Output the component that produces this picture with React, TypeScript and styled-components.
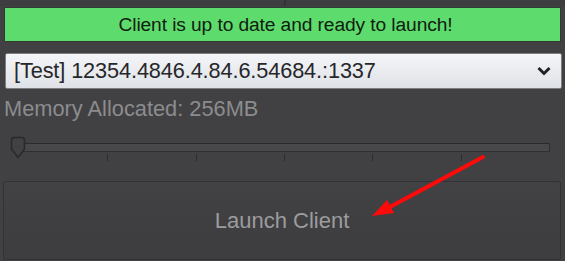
import React from "react";
import styled, { createGlobalStyle } from "styled-components";

const Global = createGlobalStyle`
  html, body { margin: 0; padding: 0; background: #414143; }
  body { font-family: "Liberation Sans", Arial, sans-serif; overflow: hidden; }
`;

const Page = styled.div`
  position: relative;
  width: 565px;
  height: 261px;
  background: #414143;
  display: flex;
  flex-direction: column;
`;

const TopStrip = styled.div`
  height: 6px;
  display: flex;
  background: #3d3d3f;
`;

const StripPane = styled.div<{ $w: number }>`
  width: ${(p) => p.$w}px;
  border-right: 2px solid #333335;
`;

const StatusBar = styled.div`
  margin: 1px 4px 0 4px;
  height: 33px;
  background: #5edb6d;
  border: 1px solid #2f3a30;
  display: flex;
  align-items: center;
  justify-content: center;
  padding-left: 6px;
  font-size: 19.2px;
  color: #102010;
  letter-spacing: -0.1px;
`;

const SelectBox = styled.div`
  margin: 11px 3px 0 5px;
  height: 34px;
  border: 1px solid #7c7e82;
  border-radius: 2px;
  background: linear-gradient(#f4f5f8, #dfe2e7);
  display: flex;
  align-items: center;
  padding: 0 10px 0 8px;
  font-size: 21.7px;
  color: #26272a;
`;

const SelectText = styled.span`
  flex: 1;
  white-space: nowrap;
  letter-spacing: -0.1px;
`;

const Label = styled.div`
  margin: 8px 0 0 4px;
  height: 24px;
  line-height: 24px;
  font-size: 21.8px;
  color: #8c8c8e;
`;

const SliderArea = styled.div`
  position: relative;
  margin: 16px 15px 0 12px;
  height: 28px;
`;

const Track = styled.div`
  margin: 6px 0 0 2px;
  height: 7px;
  border-top: 1px solid #2a2a2c;
  border-bottom: 1px solid #303032;
  border-left: 1px solid #2d2d2f;
  border-right: 1px solid #2d2d2f;
  background: #48484a;
  border-radius: 1px;
`;

const Ticks = styled.div`
  margin: 2px 0 0 7px;
  display: flex;
  justify-content: space-between;
  width: 531px;
`;

const Tick = styled.div<{ $hidden?: boolean }>`
  width: 1px;
  height: 7px;
  background: ${(p) => (p.$hidden ? "transparent" : "#2c2c2e")};
`;

const Thumb = styled.svg`
  position: absolute;
  left: -2px;
  top: -1px;
`;

const LaunchButton = styled.div`
  margin: 16px 4px 0 3px;
  height: 77px;
  border: 1px solid #333335;
  border-radius: 2px;
  background: linear-gradient(#424244, #3d3d3f);
  display: flex;
  align-items: center;
  justify-content: center;
  font-size: 22px;
  color: #9c9c9e;
`;

const Arrow = styled.svg`
  position: absolute;
  left: 0;
  top: 0;
  pointer-events: none;
`;

export default function App() {
  return (
    <>
      <Global />
      <Page>
        <TopStrip>
          <StripPane $w={284} />
        </TopStrip>
        <StatusBar>Client is up to date and ready to launch!</StatusBar>
        <SelectBox>
          <SelectText>[Test] 12354.4846.4.84.6.54684.:1337</SelectText>
          <svg width="14" height="10" viewBox="0 0 14 10">
            <path d="M1.5 2 L7 7.5 L12.5 2" fill="none" stroke="#222" strokeWidth="3" />
          </svg>
        </SelectBox>
        <Label>Memory Allocated: 256MB</Label>
        <SliderArea>
          <Track />
          <Ticks>
            <Tick $hidden />
            <Tick />
            <Tick />
            <Tick />
            <Tick />
            <Tick />
            <Tick $hidden />
          </Ticks>
          <Thumb width="16" height="24" viewBox="0 0 16 24">
            <path
              d="M1.5 4 Q1.5 1.5 4 1.5 L12 1.5 Q14.5 1.5 14.5 4 L14.5 13 L8 21.5 L1.5 13 Z"
              fill="#414143"
              stroke="#2a2a2c"
              strokeWidth="1.5"
            />
          </Thumb>
        </SliderArea>
        <LaunchButton>Launch Client</LaunchButton>
        <Arrow width="565" height="261" viewBox="0 0 565 261">
          <line x1="483" y1="157" x2="388" y2="208" stroke="#ff0a0a" strokeWidth="4" strokeLinecap="round" />
          <polygon points="372,216 394,213 387,200" fill="#ff0a0a" />
        </Arrow>
      </Page>
    </>
  );
}
